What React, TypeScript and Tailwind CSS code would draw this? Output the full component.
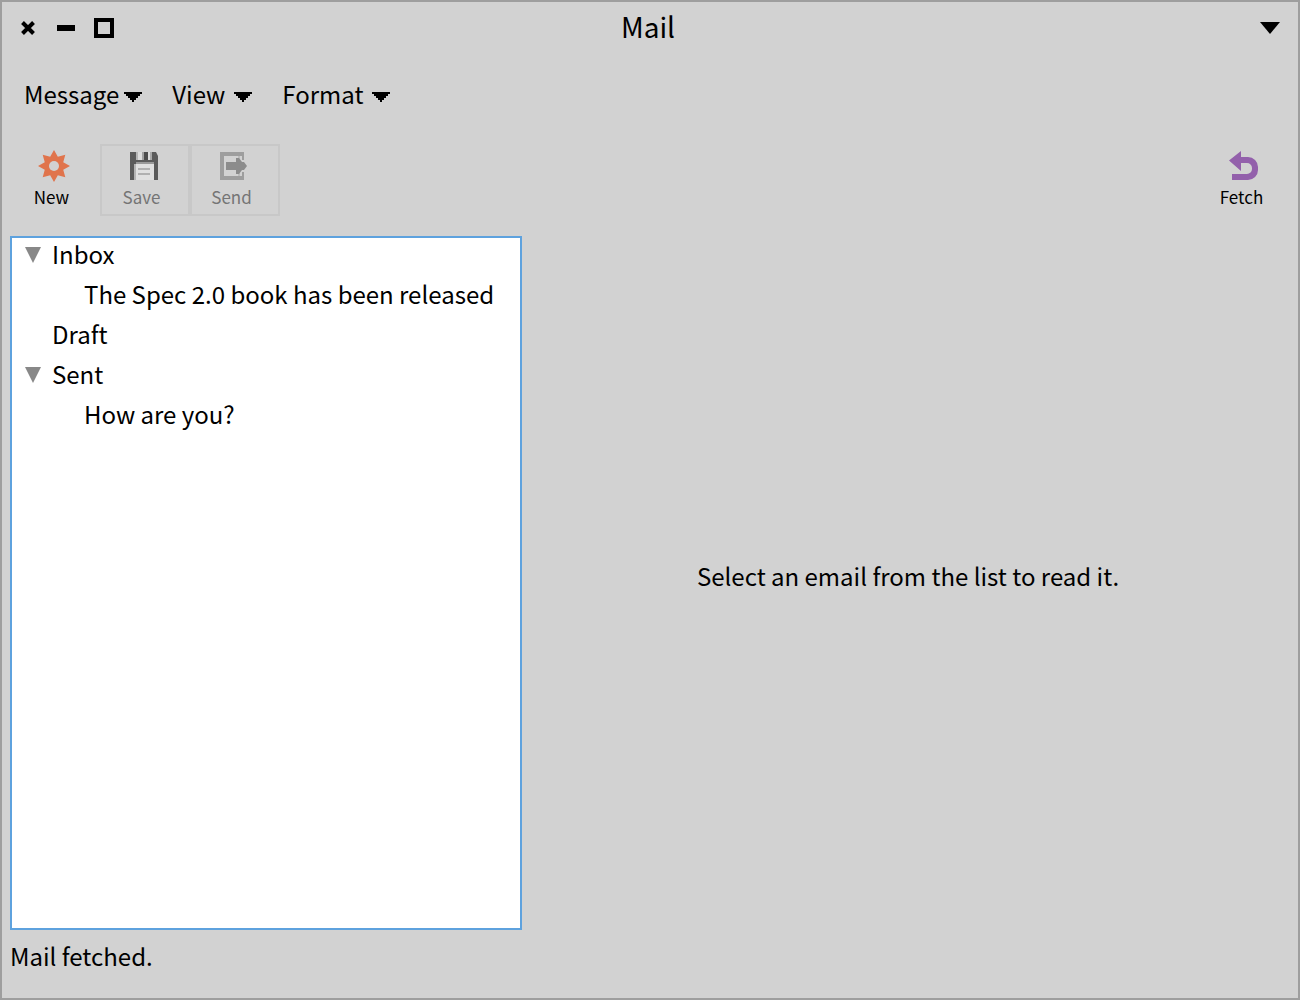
import type { ReactNode } from "react";

function MenuArrow() {
  return (
    <svg width="18" height="10" viewBox="0 0 18 10" shapeRendering="crispEdges" aria-hidden="true">
      <path d="M0 0h18v2h-2v2h-2v2h-2v2h-2v2H8V8H6V6H4V4H2V2H0z" />
    </svg>
  );
}

function MenuButton({ label, gap }: { label: string; gap: string }) {
  return (
    <button type="button" aria-haspopup="menu" className={`flex h-10 items-center ${gap}`}>
      <span>{label}</span>
      <span className="mt-1.5">
        <MenuArrow />
      </span>
    </button>
  );
}

function ToolButton({
  label,
  icon,
  disabled = false,
}: {
  label: string;
  icon: ReactNode;
  disabled?: boolean;
}) {
  return (
    <button
      type="button"
      disabled={disabled}
      className="flex h-[72px] w-[90px] flex-col items-center border-2 border-transparent pt-1 pr-[7px] text-[17px] leading-6 disabled:border-[#c8c8c8] disabled:text-[#757575]"
    >
      <span className="ml-[5px]">{icon}</span>
      <span className="mt-[3px]">{label}</span>
    </button>
  );
}

function NewIcon() {
  const points = Array.from({ length: 16 }, (_, i) => {
    const radius = i % 2 === 0 ? 16 : 10;
    const angle = (i * Math.PI) / 8;
    return `${(16 + radius * Math.sin(angle)).toFixed(2)},${(16 - radius * Math.cos(angle)).toFixed(2)}`;
  }).join(" ");
  return (
    <svg width="32" height="32" viewBox="0 0 32 32" aria-hidden="true">
      <polygon points={points} fill="#e0744c" />
      <circle cx="16" cy="16" r="5" fill="#d2d2d2" />
    </svg>
  );
}

function SaveIcon() {
  return (
    <svg width="32" height="32" viewBox="0 0 32 32" aria-hidden="true">
      <path d="M2 2h26l2 4v24H2z" fill="#5b5b5b" />
      <path d="M8 2h16v8H8z" fill="#dcdcdc" />
      <path d="M8 2h2v8H8z" fill="#b4b4b4" />
      <path d="M14 2h2v8h-2z" fill="#a0a0a0" />
      <path d="M16 2h4v8h-4z" fill="#4c4c4c" />
      <path d="M22 2h2v8h-2z" fill="#a8a8a8" />
      <path d="M8 12h18v2H8z" fill="#999999" />
      <path d="M6 14h2v16H6z" fill="#b4b4b4" />
      <path d="M8 14h18v16H8z" fill="#e0e0e0" />
      <path d="M10 18h12v2H10zM10 23h12v2H10z" fill="#b0b0b0" />
    </svg>
  );
}

function SendIcon() {
  return (
    <svg width="32" height="32" viewBox="0 0 32 32" aria-hidden="true">
      <path d="M2 2h24v8h-2V6H6v20h18v-4h2v8H2z" fill="#9e9e9e" />
      <path d="M20 6h2v4h-2zM20 22h2v4h-2z" fill="#bcbcbc" />
      <path d="M8 12h10V8h3l3 4h2l3 4-3 4h-2l-3 4h-3v-4H8z" fill="#8c8c8c" />
    </svg>
  );
}

function FetchIcon() {
  return (
    <svg width="32" height="32" viewBox="0 0 32 32" aria-hidden="true">
      <path
        d="M1 10.500 13 1v6h7a10 10 0 0 1 10 10v3a10 10 0 0 1-10 10H4v-6h15a5 5 0 0 0 5-5v-1a5 5 0 0 0-5-5h-6v8z"
        fill="#9360ab"
      />
    </svg>
  );
}

function TreeArrow() {
  return (
    <svg width="16" height="16" viewBox="0 0 16 16" aria-hidden="true">
      <path d="M0 0h16L8 16z" fill="#888888" />
    </svg>
  );
}

function Folder({ name, messages }: { name: string; messages: string[] }) {
  return (
    <li role="treeitem" aria-expanded={messages.length > 0 ? true : undefined}>
      <div className="flex h-10 items-center pb-2">
        {messages.length > 0 ? (
          <button type="button" aria-label={`Collapse ${name}`} className="mt-0.5 ml-[13px] w-[27px]">
            <TreeArrow />
          </button>
        ) : (
          <span className="w-10" />
        )}
        <span>{name}</span>
      </div>
      {messages.length > 0 && (
        <ul role="group">
          {messages.map((message) => (
            <li key={message} role="treeitem" className="flex h-10 items-center pb-2 pl-[72px]">
              {message}
            </li>
          ))}
        </ul>
      )}
    </li>
  );
}

export default function App() {
  return (
    <div className="flex min-h-screen flex-col border-2 border-[#9e9e9e] bg-[#d2d2d2] font-['Noto_Sans_CJK_SC','Source_Sans_Pro',sans-serif] text-[24px] leading-8 text-black">
      <header className="grid h-[52px] grid-cols-[1fr_auto_1fr] items-center px-[18px]">
        <div className="flex items-center">
          <button type="button" aria-label="Close" className="w-[35px]">
            <svg width="16" height="16" viewBox="0 0 16 16" aria-hidden="true">
              <path d="m2.500 2.500 11 11m0-11-11 11" stroke="#000" strokeWidth="4" />
            </svg>
          </button>
          <button type="button" aria-label="Minimize" className="w-[39px] pl-0.5">
            <svg width="18" height="6" viewBox="0 0 18 6" aria-hidden="true">
              <path d="M0 0h18v6H0z" />
            </svg>
          </button>
          <button type="button" aria-label="Maximize">
            <svg width="20" height="20" viewBox="0 0 20 20" aria-hidden="true">
              <path d="M2 2h16v16H2z" fill="none" stroke="#000" strokeWidth="4" />
            </svg>
          </button>
        </div>
        <h1 className="pr-1 pb-1 text-[28px]">Mail</h1>
        <button type="button" aria-label="Window menu" className="justify-self-end">
          <svg width="20" height="12" viewBox="0 0 20 12" aria-hidden="true">
            <path d="M0 0h20L10 12z" />
          </svg>
        </button>
      </header>

      <nav aria-label="Main menu" className="mt-5 flex gap-[30px] px-[22px]">
        <MenuButton label="Message" gap="gap-[5px]" />
        <MenuButton label="View" gap="gap-[9px]" />
        <MenuButton label="Format" gap="gap-[9px]" />
      </nav>

      <div role="toolbar" aria-label="Mail actions" className="mt-[30px] flex px-2">
        <ToolButton label="New" icon={<NewIcon />} />
        <ToolButton label="Save" icon={<SaveIcon />} disabled />
        <ToolButton label="Send" icon={<SendIcon />} disabled />
        <div className="flex-1" />
        <ToolButton label="Fetch" icon={<FetchIcon />} />
      </div>

      <main className="mt-5 flex flex-1 px-2">
        <ul role="tree" aria-label="Mailboxes" className="w-2/5 border-2 border-[#5ea2de] bg-white">
          <Folder name="Inbox" messages={["The Spec 2.0 book has been released"]} />
          <Folder name="Draft" messages={[]} />
          <Folder name="Sent" messages={["How are you?"]} />
        </ul>
        <section className="flex flex-1 items-center justify-center pb-3.5 pl-1">
          <p>Select an email from the list to read it.</p>
        </section>
      </main>

      <footer className="px-2 pt-2.5 pb-[26px]">
        <p role="status">Mail fetched.</p>
      </footer>
    </div>
  );
}
